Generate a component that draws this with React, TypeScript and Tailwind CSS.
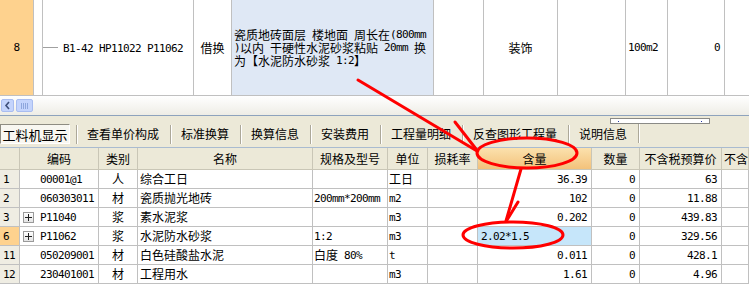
import React from "react";

type Row = {
  n: string;
  code: string;
  plus?: boolean;
  t: string;
  name: string;
  spec?: string;
  unit: string;
  qty: string;
  editing?: boolean;
  price: string;
  active?: boolean;
};

const rows: Row[] = [
  { n: "1", code: "00001@1", t: "人", name: "综合工日", unit: "工日", qty: "36.39", price: "63" },
  { n: "2", code: "060303011", t: "材", name: "瓷质抛光地砖", spec: "200mm*200mm", unit: "m2", qty: "102", price: "11.88" },
  { n: "3", code: "P11040", plus: true, t: "浆", name: "素水泥浆", unit: "m3", qty: "0.202", price: "439.83" },
  { n: "6", code: "P11062", plus: true, t: "浆", name: "水泥防水砂浆", spec: "1:2", unit: "m3", qty: "2.02*1.5", editing: true, price: "329.56", active: true },
  { n: "11", code: "050209001", t: "材", name: "白色硅酸盐水泥", spec: "白度 80%", unit: "t", qty: "0.011", price: "428.1" },
  { n: "12", code: "230401001", t: "材", name: "工程用水", unit: "m3", qty: "1.61", price: "4.96" },
];

const tabs = ["查看单价构成", "标准换算", "换算信息", "安装费用", "工程量明细", "反查图形工程量", "说明信息"];

const gridCols =
  "grid grid-cols-[20px_79px_39px_175px_75px_40px_50px_114px_48px_82px_1fr]";

// Render half-width (Latin) runs in a narrow monospace like the original UI font
function T({ s }: { s: string }) {
  const parts = s.match(/[\u0000-\u00ff]+|[^\u0000-\u00ff]+/g) ?? [];
  return (
    <>
      {parts.map((p, i) =>
        /^[\u0000-\u00ff]+$/.test(p) ? (
          <span key={i} className="font-['DejaVu_Sans_Mono',monospace] text-[11px] tracking-[-0.62px] whitespace-pre">
            {p}
          </span>
        ) : (
          <span key={i}>{p}</span>
        )
      )}
    </>
  );
}

function Sep() {
  return <div className="w-[2px] h-[19px] border-l border-l-[#aca899] border-r border-r-white" />;
}

export default function App() {
  const cell = "border-r border-b border-[#c0c0c0] h-[19px] flex items-center overflow-hidden whitespace-nowrap";
  const hcell =
    "border-r border-r-[#c9c6b6] border-b border-b-[#c9c6b6] h-[22px] flex items-center justify-center overflow-hidden whitespace-nowrap bg-[#ece9d8]";
  return (
    <div className="relative w-[749px] h-[300px] overflow-hidden bg-white text-[12px] leading-none text-black font-['Noto_Sans_CJK_SC','Liberation_Sans',sans-serif]">
      {/* top grid row */}
      <div className="flex h-[96px] border-b border-[#c0c0c0]">
        <div className="w-[34px] shrink-0 bg-[#fed28e] border-r border-[#c0c0c0] flex items-center justify-center">
          <T s="8" />
        </div>
        <div className="w-[9px] shrink-0 border-r border-[#c0c0c0]" />
        <div className="w-[151px] shrink-0 border-r border-[#c0c0c0] flex items-center">
          <div className="w-[15px] h-px bg-[#a0a0a0]" />
          <span className="ml-[5px] whitespace-nowrap">
            <T s="B1-42 HP11022 P11062" />
          </span>
        </div>
        <div className="w-[38px] shrink-0 border-r border-[#c0c0c0] flex items-center justify-center">借换</div>
        <div className="w-[202px] shrink-0 bg-[#dfe8f5] border-r border-[#c0c0c0] flex items-center pl-[2px] leading-[13px] whitespace-nowrap overflow-hidden">
          <div className="flex flex-col">
            <div className="h-[13px] flex items-center">
              <T s="瓷质地砖面层 楼地面 周长在(800mm" />
            </div>
            <div className="h-[13px] flex items-center">
              <T s=")以内 干硬性水泥砂浆粘贴 20mm 换" />
            </div>
            <div className="h-[13px] flex items-center">
              <T s="为【水泥防水砂浆 1:2】" />
            </div>
          </div>
        </div>
        <div className="w-[50px] shrink-0 border-r border-[#c0c0c0]" />
        <div className="w-[74px] shrink-0 border-r border-[#c0c0c0] flex items-center justify-center">装饰</div>
        <div className="w-[68px] shrink-0 border-r border-[#c0c0c0]" />
        <div className="w-[42px] shrink-0 border-r border-[#c0c0c0] flex items-center pl-[2px]">
          <T s="100m2" />
        </div>
        <div className="w-[57px] shrink-0 border-r border-[#c0c0c0] flex items-center justify-end pr-[4px]">
          <T s="0" />
        </div>
        <div className="flex-1" />
      </div>

      {/* horizontal scroll area */}
      <div className="h-[20px] border-b border-[#8ea3bd] bg-gradient-to-b from-white to-[#eeede6] flex items-start pt-[3px] pl-[1px] gap-[2px]">
        <div className="w-[13px] h-[13px] rounded-[2px] bg-[#c4d4fc] border border-[#a9bdf0] flex items-center justify-center">
          <svg width="7" height="9" viewBox="0 0 7 9">
            <path d="M5 1 L2 4.5 L5 8" fill="none" stroke="#3d4f7a" strokeWidth="1.6" />
          </svg>
        </div>
        <div className="w-[17px] h-[13px] rounded-[2px] bg-[#c4d4fc] border border-[#a9bdf0] flex items-center justify-center gap-[1px]">
          <div className="w-px h-[6px] bg-[#8ea6dc]" />
          <div className="w-px h-[6px] bg-[#8ea6dc]" />
          <div className="w-px h-[6px] bg-[#8ea6dc]" />
          <div className="w-px h-[6px] bg-[#8ea6dc]" />
        </div>
      </div>

      {/* tab bar */}
      <div className="relative h-[32px] bg-[#ece9d8] border-b border-[#a9bbd0] flex items-start pt-[8px]">
        <div className="w-[70px] h-[20px] flex items-center justify-center bg-[#f8f7f1] border border-t-[#8e8c82] border-l-[#8e8c82] border-r-white border-b-white text-[13px]">
          工料机显示
        </div>
        <div className="w-[6px]" />
        {tabs.map((t) => (
          <div key={t} className="flex items-center h-[20px]">
            <Sep />
            <div className="pl-[9px] pr-[11px] whitespace-nowrap">{t}</div>
          </div>
        ))}
        <Sep />
        <div className="absolute left-[610px] top-[2px] w-[100px] h-[6px] bg-white border border-[#8a8a86] flex items-center justify-between px-[7px]">
          <div className="w-px h-px bg-[#2a3aa0]" />
          <div className="w-px h-px bg-[#2a3aa0]" />
        </div>
      </div>

      {/* header */}
      <div className={gridCols}>
        <div className={hcell} />
        <div className={hcell}>编码</div>
        <div className={hcell}>类别</div>
        <div className={hcell}>名称</div>
        <div className={hcell}>规格及型号</div>
        <div className={hcell}>单位</div>
        <div className={hcell}>损耗率</div>
        <div className="border-r border-r-[#c9c6b6] border-b border-b-[#c9c6b6] h-[22px] flex items-center justify-center bg-gradient-to-b from-[#fbe1ad] to-[#f3c27a]">
          含量
        </div>
        <div className={hcell}>数量</div>
        <div className={hcell}>不含税预算价</div>
        <div className={hcell + " !justify-start pl-[2px]"}>不含</div>
      </div>

      {/* rows */}
      {rows.map((r) => (
        <div key={r.n} className={gridCols}>
          <div className={cell + " pl-[3px] " + (r.active ? "bg-[#fed28e]" : "bg-[#efede3]")}>
            <T s={r.n} />
          </div>
          <div className={cell + (r.plus ? " pl-[3px]" : " pl-[20px]")}>
            {r.plus && (
              <div className="w-[11px] h-[11px] mr-[6px] shrink-0 border border-[#9a9a9a] bg-gradient-to-b from-white to-[#e4e4e4] flex items-center justify-center">
                <svg width="7" height="7" viewBox="0 0 7 7">
                  <path d="M0 3.5 H7 M3.5 0 V7" stroke="#222" strokeWidth="1" />
                </svg>
              </div>
            )}
            <T s={r.code} />
          </div>
          <div className={cell + " justify-center"}>{r.t}</div>
          <div className={cell + " pl-[2px]"}>{r.name}</div>
          <div className={cell + " pl-[1px]"}>
            <T s={r.spec ?? ""} />
          </div>
          <div className={cell + " pl-[1px]"}>
            <T s={r.unit} />
          </div>
          <div className={cell} />
          {r.editing ? (
            <div className={cell + " pl-[3px] bg-[#c6e6fa]"}>
              <T s={r.qty} />
            </div>
          ) : (
            <div className={cell + " justify-end pr-[4px]"}>
              <T s={r.qty} />
            </div>
          )}
          <div className={cell + " justify-end pr-[4px]"}>
            <T s="0" />
          </div>
          <div className={cell + " justify-end pr-[4px]"}>
            <T s={r.price} />
          </div>
          <div className={cell} />
        </div>
      ))}

      {/* red annotations */}
      <svg className="absolute inset-0 pointer-events-none" width="749" height="300" viewBox="0 0 749 300">
        <g fill="none" stroke="#ff0000" strokeWidth="3" strokeLinecap="round">
          <path d="M358 80 L477 151" />
          <path d="M455 122 L476 149" />
          <ellipse cx="527" cy="153" rx="50" ry="15" />
          <path d="M521 169 L506 221" />
          <path d="M518 202 L507 220" />
          <ellipse cx="513" cy="235" rx="50" ry="13" />
        </g>
      </svg>
    </div>
  );
}
